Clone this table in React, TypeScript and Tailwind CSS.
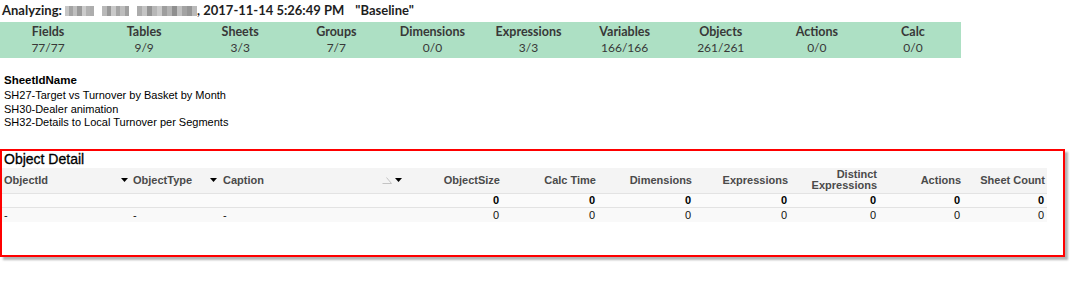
import React from "react";

const stats = [
  ["Fields", "77/77"],
  ["Tables", "9/9"],
  ["Sheets", "3/3"],
  ["Groups", "7/7"],
  ["Dimensions", "0/0"],
  ["Expressions", "3/3"],
  ["Variables", "166/166"],
  ["Objects", "261/261"],
  ["Actions", "0/0"],
  ["Calc", "0/0"],
];

const blurA = ["bg-[#c6c6c6]", "bg-[#a4a4a4]", "bg-[#bfbfbf]", "bg-[#9a9a9a]", "bg-[#cccccc]", "bg-[#b2b2b2]", "bg-[#adadad]"];
const blurB = ["bg-[#b9b9b9]", "bg-[#989898]", "bg-[#c9c9c9]", "bg-[#a5a5a5]", "bg-[#bdbdbd]", "bg-[#a0a0a0]"];
const blurC = ["bg-[#acacac]", "bg-[#c4c4c4]", "bg-[#949494]", "bg-[#b7b7b7]", "bg-[#cacaca]", "bg-[#9e9e9e]", "bg-[#b3b3b3]", "bg-[#8f8f8f]", "bg-[#c0c0c0]", "bg-[#a3a3a3]", "bg-[#969696]", "bg-[#bababa]"];

function Blur({ cells, w }: { cells: string[]; w: string }) {
  return (
    <span className={`inline-flex h-[10px] ${w} overflow-hidden align-middle`}>
      {cells.map((c, i) => (
        <span key={i} className={`h-full flex-1 ${c}`} />
      ))}
    </span>
  );
}

function Down() {
  return (
    <svg width="7" height="4" viewBox="0 0 7 4" className="shrink-0">
      <polygon points="0,0 7,0 3.5,4" fill="#000" />
    </svg>
  );
}

function SortMark() {
  return (
    <svg width="10" height="7" viewBox="0 0 10 7" className="shrink-0">
      <polyline points="0.5,6.5 9.5,6.5 4.5,0.5" fill="none" stroke="#c4c4c4" strokeWidth="1" />
    </svg>
  );
}

const numCols = [
  { label: ["ObjectSize"], w: "w-[96px]" },
  { label: ["Calc Time"], w: "w-[96px]" },
  { label: ["Dimensions"], w: "w-[96px]" },
  { label: ["Expressions"], w: "w-[96px]" },
  { label: ["Distinct", "Expressions"], w: "w-[89px]" },
  { label: ["Actions"], w: "w-[84px]" },
  { label: ["Sheet Count"], w: "w-[84px]" },
];

export default function App() {
  return (
    <div className="relative h-[281px] w-[1079px] overflow-hidden bg-white antialiased">
      {/* Title */}
      <div className="flex h-[22px] items-center pl-[2px] font-['Lato',sans-serif] text-[13px] font-bold text-[#1e1e1e] whitespace-pre">
        <span>Analyzing: </span>
        <span className="flex items-center gap-[8px]">
          <Blur cells={blurA} w="w-[29px]" />
          <Blur cells={blurB} w="w-[27px]" />
          <Blur cells={blurC} w="w-[60px]" />
        </span>
        <span>, 2017-11-14 5:26:49 PM</span>
        <span className="ml-[11px]">"Baseline"</span>
      </div>

      {/* Stats bar */}
      <div className="grid h-[36px] w-[961px] grid-cols-10 bg-[#ade0c4] pt-[2px] font-['Lato',sans-serif] text-[#383838]">
        {stats.map(([k, v]) => (
          <div key={k} className="flex flex-col items-center">
            <span className="text-[12.5px] font-bold leading-[16px]">{k}</span>
            <span className="text-[12px] leading-[16px]">{v}</span>
          </div>
        ))}
      </div>

      {/* Sheet list */}
      <div className="pl-[4px] pt-[15px] font-['Liberation_Sans',Arial,sans-serif] text-[11px] text-black">
        <div className="text-[11.5px] font-bold leading-[14px]">SheetIdName</div>
        <div className="mt-[2px] leading-[13.5px]">
          <div>SH27-Target vs Turnover by Basket by Month</div>
          <div>SH30-Dealer animation</div>
          <div>SH32-Details to Local Turnover per Segments</div>
        </div>
      </div>

      {/* Object Detail box */}
      <div className="mt-[19px] h-[108px] w-[1065px] border-2 border-[#ff0000] bg-white shadow-[3px_3px_2px_rgba(0,0,0,0.3)]">
        <div className="flex h-[17px] items-center pl-[2px] font-['Liberation_Sans',Arial,sans-serif] text-[14px] leading-[17px] text-black [-webkit-text-stroke:0.3px_#000]">
          Object Detail
        </div>
        <div className="w-[1045px] font-['Liberation_Sans',Arial,sans-serif]">
          {/* Header row */}
          <div className="flex h-[26px] border-b border-[#e3e3e3] bg-[#f4f4f4] text-[11px] font-bold text-[#4a4a4a]">
            <div className="flex w-[128px] items-center justify-between pl-[2px] pr-[2px]">
              <span>ObjectId</span>
              <Down />
            </div>
            <div className="flex w-[90px] items-center justify-between pl-[3px] pr-[3px]">
              <span>ObjectType</span>
              <Down />
            </div>
            <div className="flex w-[186px] items-center pl-[3px] pr-[4px]">
              <span className="flex-1">Caption</span>
              <SortMark />
              <span className="ml-[3px]">
                <Down />
              </span>
            </div>
            {numCols.map((c) => (
              <div key={c.label.join(" ")} className={`flex ${c.w} flex-col items-end justify-center pr-[2px] leading-[11px]`}>
                {c.label.map((l) => (
                  <span key={l}>{l}</span>
                ))}
              </div>
            ))}
          </div>
          {/* Totals row */}
          <div className="flex h-[14px] border-b border-[#e3e3e3] bg-[#fbfbfb] font-['Liberation_Sans_Narrow','Liberation_Sans',sans-serif] text-[11px] font-bold leading-[13px] text-black">
            <div className="w-[404px]" />
            {numCols.map((c) => (
              <div key={c.label.join(" ")} className={`${c.w} pr-[3px] text-right`}>
                0
              </div>
            ))}
          </div>
          {/* Data row */}
          <div className="flex h-[14px] bg-[#f9f9f9] font-['Liberation_Sans',Arial,sans-serif] text-[11px] leading-[14px] text-[#111]">
            <div className="w-[128px] pl-[2px]">-</div>
            <div className="w-[90px] pl-[3px]">-</div>
            <div className="w-[186px] pl-[3px]">-</div>
            {numCols.map((c) => (
              <div key={c.label.join(" ")} className={`${c.w} pr-[3px] text-right`}>
                0
              </div>
            ))}
          </div>
        </div>
      </div>
    </div>
  );
}
